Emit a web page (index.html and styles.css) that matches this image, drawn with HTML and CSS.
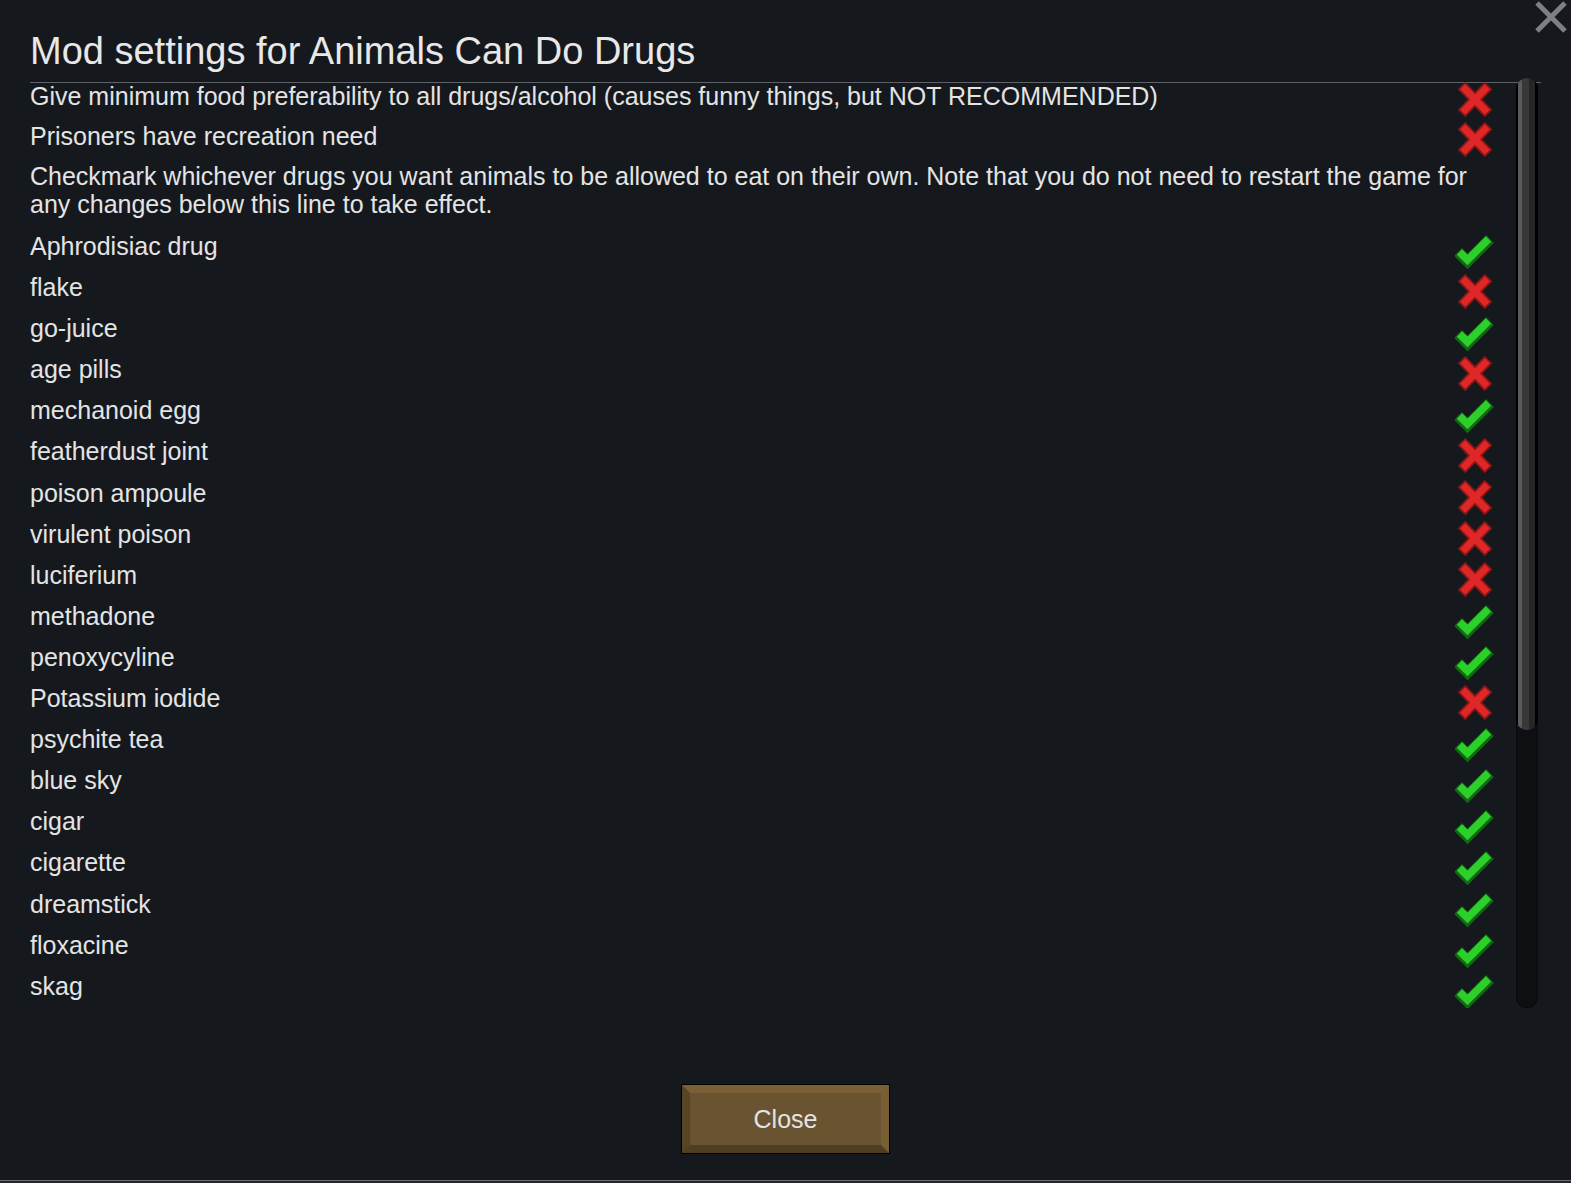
FILE: index.html
```html
<!DOCTYPE html>
<html>
<head>
    <title>Mod settings</title>
    <link rel="stylesheet" href="styles.css">
</head>
<body>
    <div class="window">
        <!-- close X, top right -->
        <button class="close-x" title="Close">
            <svg width="32" height="32" viewBox="0 0 32 32">
                <path d="M2 2 L30 30 M30 2 L2 30" stroke="#7c7f83" stroke-width="5"/>
            </svg>
        </button>

        <h1 class="title">Mod settings for Animals Can Do Drugs</h1>

        <div class="scroll-wrap">
            <div class="list">
                <div class="row row-top">
                    <span class="label">Give minimum food preferability to all drugs/alcohol (causes funny things, but NOT RECOMMENDED)</span>
                    <span class="box off"></span>
                </div>
                <div class="row row-top">
                    <span class="label">Prisoners have recreation need</span>
                    <span class="box off"></span>
                </div>

                <p class="note">Checkmark whichever drugs you want animals to be allowed to eat on their own. Note that you do not need to restart the game for any changes below this line to take effect.</p>

                <div class="row"><span class="label">Aphrodisiac drug</span><span class="box on"></span></div>
                <div class="row"><span class="label">flake</span><span class="box off"></span></div>
                <div class="row"><span class="label">go-juice</span><span class="box on"></span></div>
                <div class="row"><span class="label">age pills</span><span class="box off"></span></div>
                <div class="row"><span class="label">mechanoid egg</span><span class="box on"></span></div>
                <div class="row"><span class="label">featherdust joint</span><span class="box off"></span></div>
                <div class="row"><span class="label">poison ampoule</span><span class="box off"></span></div>
                <div class="row"><span class="label">virulent poison</span><span class="box off"></span></div>
                <div class="row"><span class="label">luciferium</span><span class="box off"></span></div>
                <div class="row"><span class="label">methadone</span><span class="box on"></span></div>
                <div class="row"><span class="label">penoxycyline</span><span class="box on"></span></div>
                <div class="row"><span class="label">Potassium iodide</span><span class="box off"></span></div>
                <div class="row"><span class="label">psychite tea</span><span class="box on"></span></div>
                <div class="row"><span class="label">blue sky</span><span class="box on"></span></div>
                <div class="row"><span class="label">cigar</span><span class="box on"></span></div>
                <div class="row"><span class="label">cigarette</span><span class="box on"></span></div>
                <div class="row"><span class="label">dreamstick</span><span class="box on"></span></div>
                <div class="row"><span class="label">floxacine</span><span class="box on"></span></div>
                <div class="row"><span class="label">skag</span><span class="box on"></span></div>
            </div>

            <div class="scrollbar">
                <div class="thumb"></div>
            </div>
        </div>

        <div class="footer">
            <button class="close-btn">Close</button>
        </div>
    </div>
    <div class="world-edge"></div>

    <script>
        // fill the checkbox icons
        var check = '<svg width="40" height="36" viewBox="0 0 40 36">' +
            '<path d="M3 19 L12.5 28.5 L35 6" fill="none" stroke="#116a11" stroke-width="11"/>' +
            '<path d="M4.5 19 L12.5 27 L33.5 6" fill="none" stroke="#2dcf2a" stroke-width="7.5"/>' +
            '</svg>';
        var cross = '<svg width="40" height="36" viewBox="0 0 40 36">' +
            '<path d="M6.5 3.5 L33.5 31.5 M33.5 3.5 L6.5 31.5" stroke="#8c1616" stroke-width="10.5"/>' +
            '<path d="M7.7 4.7 L32.3 30.3 M32.3 4.7 L7.7 30.3" stroke="#df2727" stroke-width="7"/>' +
            '</svg>';
        document.querySelectorAll('.box').forEach(function(el) {
            el.innerHTML = el.classList.contains('on') ? check : cross;
        });
    </script>
</body>
</html>
```

FILE: styles.css
```css
/* dialog window */
body {
    margin: 0;
    height: 1183px;
    overflow: hidden;
    background: #15191e;
    font-family: "Liberation Sans", Arial, sans-serif;
    color: #e4e4e4;
}

.window {
    position: relative;
    height: 1180px;
    padding: 30px 30px 0;
    box-sizing: border-box;
}

.close-x {
    position: absolute;
    top: 1px;
    right: 4px;
    padding: 0;
    border: none;
    background: none;
    cursor: pointer;
    line-height: 0;
}

.title {
    margin: 0;
    padding-bottom: 10px;
    font-size: 38px;
    font-weight: normal;
    line-height: 42px;
    color: #e8e8e8;
    border-bottom: 1px solid #5f6266;
}

/* scrolling list */
.scroll-wrap {
    display: flex;
    height: 930px;
    margin-top: -5px;
    overflow: hidden;
}

.list {
    width: 1470px;
    padding-top: 4px;
    font-size: 25px;
    line-height: 28px;
}

.row {
    display: flex;
    justify-content: space-between;
    align-items: flex-start;
    height: 41.1px;
}

.row-top {
    height: 40px;
}

.label {
    white-space: nowrap;
}

.box {
    display: block;
    width: 40px;
    height: 36px;
    margin-right: 5px;
}

.box svg {
    display: block;
}

.row:not(.row-top) .box {
    margin-top: 1px;
}

.note {
    margin: 0 0 14px;
}

.scrollbar {
    width: 22px;
    height: 930px;
    margin-left: 16px;
    border-radius: 11px;
    background: #0d0f12;
    box-shadow: inset 0 0 0 1px #090a0c;
}

.thumb {
    height: 652px;
    border-radius: 11px;
    background: linear-gradient(to right, #000 0 2px, #5b5b5b 2px 6px, #383838 6px 13px, #262626 13px 19px, #000 19px);
}

/* bottom button */
.footer {
    display: flex;
    justify-content: center;
    margin-top: 77px;
}

.close-btn {
    width: 207px;
    height: 68px;
    padding: 0;
    border-style: solid;
    border-width: 8px;
    border-color: #7b6035 #785e34 #4f3e24 #574527;
    background: #6a5330;
    box-shadow: 0 0 0 1px #000;
    font-family: "Liberation Sans", Arial, sans-serif;
    font-size: 25px;
    color: #e4e4e4;
    cursor: pointer;
}

.world-edge {
    height: 3px;
    border-top: 1px solid #66737f;
    background: #2a2420;
}
```
